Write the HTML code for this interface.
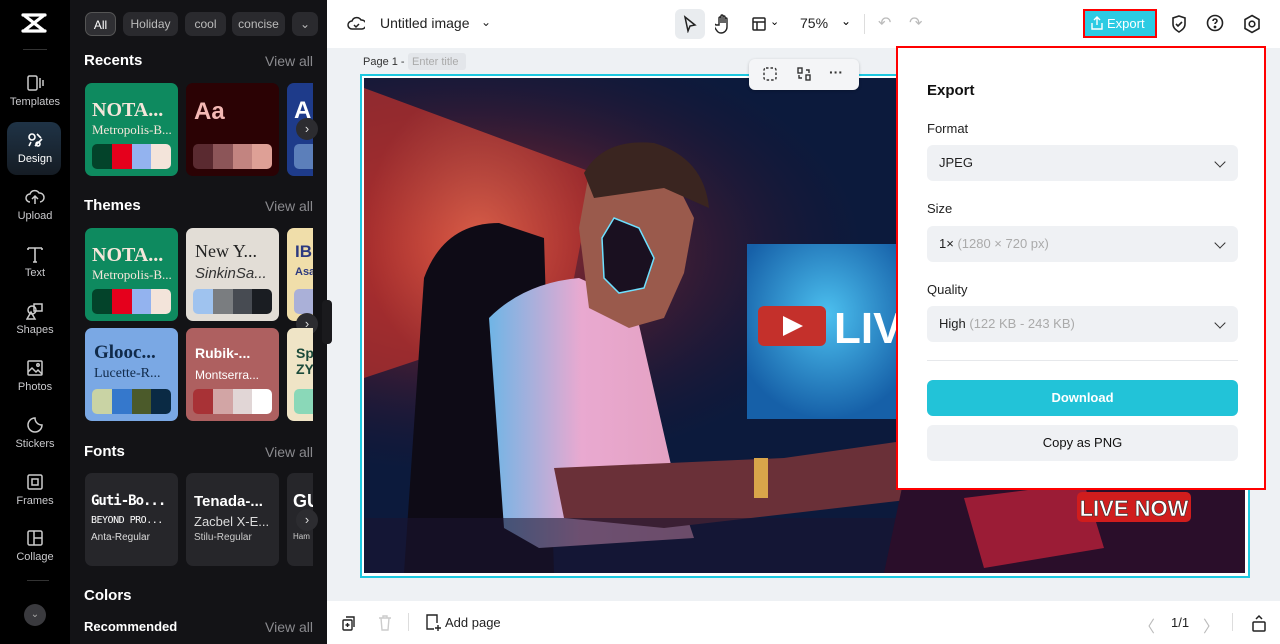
<!DOCTYPE html>
<html><head><meta charset="utf-8">
<style>
*{box-sizing:border-box;margin:0;padding:0}
body{width:1280px;height:644px;overflow:hidden;font-family:"Liberation Sans",sans-serif;background:#eef1f4;position:relative}
.abs{position:absolute}
#rail{left:0;top:0;width:70px;height:644px;background:#000}
.ri{position:absolute;left:0;width:70px;text-align:center;color:#c9c9cc;font-size:11px}
.ri svg{display:block;margin:0 auto 4px}
#panel{left:70px;top:0;width:257px;height:644px;background:#131316;overflow:hidden}
.chip{position:absolute;top:12px;height:24px;border-radius:7px;background:#2a2a2e;color:#bbb;font-size:12px;line-height:24px;text-align:center}
.h{position:absolute;left:14px;color:#fff;font-weight:bold;font-size:15px}
.va{position:absolute;right:14px;color:#8a8a8e;font-size:14px}
.card{position:absolute;width:93px;height:93px;border-radius:7px;overflow:hidden;white-space:nowrap}
.card.c3{width:26px;border-radius:7px 0 0 7px}
.sw{position:absolute;left:7px;bottom:7px;width:79px;height:25px;border-radius:5px;overflow:hidden;display:flex}
.sw i{flex:1}
.arr{position:absolute;width:22px;height:22px;border-radius:50%;background:#2c2c30;color:#ddd;font-size:13px;text-align:center;line-height:21px}
#top{left:327px;top:0;width:953px;height:48px;background:#fff}
#bot{left:327px;top:601px;width:953px;height:43px;background:#fff}
.fld{position:absolute;left:29px;width:311px;height:36px;border-radius:6px;background:#eff1f4;font-size:13px;color:#222;line-height:36px;padding-left:12px}
.fld b{position:absolute;right:14px;top:13px;width:8px;height:8px;border-right:1.6px solid #333;border-bottom:1.6px solid #333;transform:rotate(45deg)}
.lbl{position:absolute;left:29px;font-size:13px;color:#222}
</style></head><body>

<div id="rail" class="abs">
  <svg class="abs" style="left:20px;top:12px" width="28" height="22" viewBox="0 0 28 22"><path d="M3 3h22M3 19h22M5 4l18 14M23 4L5 18" stroke="#fff" stroke-width="3.2" fill="none" stroke-linecap="round"/></svg>
  <div class="abs" style="left:23px;top:49px;width:24px;height:1px;background:#333"></div>
  <div class="ri" style="top:74px"><svg width="18" height="18" viewBox="0 0 18 18" fill="none" stroke="#ccc" stroke-width="1.5"><rect x="2" y="2" width="9" height="14" rx="1.5"/><path d="M14 4v10M17 6v6"/></svg>Templates</div>
  <div class="abs" style="left:7px;top:122px;width:54px;height:53px;border-radius:10px;background:linear-gradient(#1f3346,#151c24)"></div>
  <div class="ri" style="top:131px;color:#fff"><svg width="18" height="18" viewBox="0 0 18 18" fill="none" stroke="#fff" stroke-width="1.6"><circle cx="6" cy="6" r="3"/><path d="M9 15l7-7M3 15l2-4M11 3l4 4"/><circle cx="12" cy="13" r="2"/></svg>Design</div>
  <div class="ri" style="top:188px"><svg width="20" height="18" viewBox="0 0 20 18" fill="none" stroke="#ccc" stroke-width="1.5"><path d="M5 14a4 4 0 010-8 5 5 0 019-1 4 4 0 011 9"/><path d="M10 16V9M7 11l3-3 3 3"/></svg>Upload</div>
  <div class="ri" style="top:245px"><svg width="18" height="18" viewBox="0 0 18 18" fill="none" stroke="#ccc" stroke-width="1.6"><path d="M2 3h14M9 3v14M2 3v2M16 3v2M7 17h4"/></svg>Text</div>
  <div class="ri" style="top:302px"><svg width="18" height="18" viewBox="0 0 18 18" fill="none" stroke="#ccc" stroke-width="1.5"><rect x="8" y="2" width="8" height="7"/><circle cx="6" cy="8" r="4"/><path d="M5 10l4 7H1z"/></svg>Shapes</div>
  <div class="ri" style="top:359px"><svg width="18" height="18" viewBox="0 0 18 18" fill="none" stroke="#ccc" stroke-width="1.5"><rect x="2" y="2" width="14" height="14" rx="1"/><path d="M2 13l4-4 4 4 2-2 4 4"/><circle cx="12" cy="6" r="1.2"/></svg>Photos</div>
  <div class="ri" style="top:416px"><svg width="18" height="18" viewBox="0 0 18 18" fill="none" stroke="#ccc" stroke-width="1.5"><path d="M16 9A7 7 0 119 2c0 4 3 7 7 7z"/></svg>Stickers</div>
  <div class="ri" style="top:473px"><svg width="18" height="18" viewBox="0 0 18 18" fill="none" stroke="#ccc" stroke-width="1.5"><rect x="2" y="2" width="14" height="14" rx="1.5"/><rect x="6" y="6" width="6" height="6"/></svg>Frames</div>
  <div class="ri" style="top:529px"><svg width="18" height="18" viewBox="0 0 18 18" fill="none" stroke="#ccc" stroke-width="1.5"><rect x="2" y="2" width="14" height="14" rx="1.5"/><path d="M8 2v14M8 9h8"/></svg>Collage</div>
  <div class="abs" style="left:27px;top:580px;width:22px;height:1px;background:#333"></div>
  <div class="abs" style="left:24px;top:604px;width:22px;height:22px;border-radius:50%;background:#3a3a3e;color:#aaa;font-size:10px;text-align:center;line-height:22px">&#8964;</div>
</div>

<div id="panel" class="abs">
  <div class="chip" style="left:15px;width:31px;background:#2f2f33;color:#fff;border:1px solid #555">All</div>
  <div class="chip" style="left:53px;width:55px">Holiday</div>
  <div class="chip" style="left:115px;width:41px">cool</div>
  <div class="chip" style="left:162px;width:53px">concise</div>
  <div class="chip" style="left:222px;width:26px">&#8964;</div>

  <div class="h" style="top:52px">Recents</div><div class="va" style="top:53px">View all</div>
  <div class="card" style="left:15px;top:83px;background:#0e8a5f"><div style="position:absolute;left:7px;top:16px;color:#f5e6da;font:900 20px 'Liberation Serif',serif">NOTA...</div><div style="position:absolute;left:7px;top:39px;color:#f5e6da;font:13px 'Liberation Serif',serif">Metropolis-B...</div><div class="sw"><i style="background:#03432a"></i><i style="background:#e5001c"></i><i style="background:#93b3ef"></i><i style="background:#f3e4da"></i></div></div>
  <div class="card" style="left:116px;top:83px;background:#2b0204"><div style="position:absolute;left:8px;top:15px;color:#f4b8b4;font:bold 24px 'Liberation Sans',sans-serif">Aa</div><div class="sw"><i style="background:#5a2a30"></i><i style="background:#8c5558"></i><i style="background:#c28480"></i><i style="background:#dea096"></i></div></div>
  <div class="card c3" style="left:217px;top:83px;background:#1e3b8a"><div style="position:absolute;left:7px;top:14px;color:#fff;font:bold 24px sans-serif">A</div><div class="sw" style="background:#5c7fba"></div></div>
  <div class="arr" style="left:226px;top:118px">&#8250;</div>

  <div class="h" style="top:197px">Themes</div><div class="va" style="top:198px">View all</div>
  <div class="card" style="left:15px;top:228px;background:#0e8a5f"><div style="position:absolute;left:7px;top:16px;color:#f5e6da;font:900 20px 'Liberation Serif',serif">NOTA...</div><div style="position:absolute;left:7px;top:39px;color:#f5e6da;font:13px 'Liberation Serif',serif">Metropolis-B...</div><div class="sw"><i style="background:#03432a"></i><i style="background:#e5001c"></i><i style="background:#93b3ef"></i><i style="background:#f3e4da"></i></div></div>
  <div class="card" style="left:116px;top:228px;background:#e2ddd6"><div style="position:absolute;left:9px;top:13px;color:#222;font:18px 'Liberation Serif',serif">New Y...</div><div style="position:absolute;left:9px;top:37px;color:#333;font:italic 15px sans-serif">SinkinSa...</div><div class="sw"><i style="background:#9fc3ef"></i><i style="background:#7a7d80"></i><i style="background:#474b52"></i><i style="background:#1a1d22"></i></div></div>
  <div class="card c3" style="left:217px;top:228px;background:#f0deaa"><div style="position:absolute;left:8px;top:14px;color:#2d3a80;font:bold 17px sans-serif">IB</div><div style="position:absolute;left:8px;top:38px;color:#2d3a80;font:bold 11px sans-serif">Asa</div><div class="sw" style="background:#aab0d8"></div></div>
  <div class="arr" style="left:226px;top:313px">&#8250;</div>
  <div class="card" style="left:15px;top:328px;background:#7aa8e4"><div style="position:absolute;left:9px;top:14px;color:#102a4a;font:bold 19px 'Liberation Serif',serif">Glooc...</div><div style="position:absolute;left:9px;top:38px;color:#102a4a;font:14px 'Liberation Serif',serif">Lucette-R...</div><div class="sw"><i style="background:#c9d3a4"></i><i style="background:#3578cc"></i><i style="background:#4b5a2a"></i><i style="background:#0a2a44"></i></div></div>
  <div class="card" style="left:116px;top:328px;background:#ae6060"><div style="position:absolute;left:9px;top:17px;color:#fff;font:bold 14px sans-serif">Rubik-...</div><div style="position:absolute;left:9px;top:40px;color:#fff;font:12px sans-serif">Montserra...</div><div class="sw"><i style="background:#a83236"></i><i style="background:#d2a5a5"></i><i style="background:#e1d6d6"></i><i style="background:#fff"></i></div></div>
  <div class="card c3" style="left:217px;top:328px;background:#efe4c6"><div style="position:absolute;left:9px;top:17px;color:#1b4a3a;font:bold 14px sans-serif">Sp<br>ZY</div><div class="sw" style="background:#8ad8b8"></div></div>

  <div class="h" style="top:443px">Fonts</div><div class="va" style="top:444px">View all</div>
  <div class="card" style="left:15px;top:473px;background:#26262a"><div style="position:absolute;left:6px;top:20px;color:#fff;font:bold 14px 'DejaVu Sans Mono',monospace;letter-spacing:-1px">Guti-Bo...</div><div style="position:absolute;left:6px;top:42px;color:#fff;font:10px 'DejaVu Sans Mono',monospace;letter-spacing:-0.5px">BEYOND PRO...</div><div style="position:absolute;left:6px;top:59px;color:#ddd;font:10px sans-serif">Anta-Regular</div></div>
  <div class="card" style="left:116px;top:473px;background:#26262a"><div style="position:absolute;left:8px;top:20px;color:#fff;font:bold 15px sans-serif">Tenada-...</div><div style="position:absolute;left:8px;top:41px;color:#ddd;font:13px sans-serif">Zacbel X-E...</div><div style="position:absolute;left:8px;top:59px;color:#ccc;font:10px sans-serif">Stilu-Regular</div></div>
  <div class="card c3" style="left:217px;top:473px;background:#26262a"><div style="position:absolute;left:6px;top:18px;color:#fff;font:bold 18px sans-serif">GU</div><div style="position:absolute;left:6px;top:59px;color:#ccc;font:8px sans-serif">Ham</div></div>
  <div class="arr" style="left:226px;top:509px">&#8250;</div>

  <div class="h" style="top:587px">Colors</div>
  <div class="h" style="top:619px;font-size:13px">Recommended</div><div class="va" style="top:619px">View all</div>
</div>
<div class="abs" style="left:322px;top:300px;width:10px;height:44px;border-radius:4px;background:#1a1a1d"></div>

<div id="top" class="abs">
  <svg class="abs" style="left:20px;top:15px" width="18" height="18" viewBox="0 0 18 18" fill="none" stroke="#222" stroke-width="1.5"><path d="M5 14a4 4 0 010-8 5 5 0 019-1 4 4 0 011 9z"/><path d="M7 10l2 2 3-3"/></svg>
  <div class="abs" style="left:53px;top:15px;font-size:14px;color:#222">Untitled image</div>
  <div class="abs" style="left:154px;top:15px;font-size:12px;color:#222">&#8964;</div>
  <div class="abs" style="left:348px;top:9px;width:30px;height:30px;border-radius:6px;background:#e9ecef"></div>
  <svg class="abs" style="left:355px;top:15px" width="16" height="18" viewBox="0 0 16 18" fill="none" stroke="#222" stroke-width="1.5"><path d="M3 2l10 8-5 1-2 5z"/></svg>
  <svg class="abs" style="left:388px;top:14px" width="16" height="20" viewBox="0 0 16 20" fill="none" stroke="#222" stroke-width="1.4"><path d="M4 11V4a1 1 0 012 0v5V2a1 1 0 012 0v7V3a1 1 0 012 0v6V5a1 1 0 012 0v8a6 6 0 01-6 6c-3 0-4-2-6-5l-1-2a1 1 0 012-1z"/></svg>
  <svg class="abs" style="left:424px;top:16px" width="16" height="16" viewBox="0 0 16 16" fill="none" stroke="#222" stroke-width="1.5"><rect x="2" y="2" width="12" height="12" rx="1"/><path d="M2 6h12M6 6v8"/></svg>
  <div class="abs" style="left:443px;top:15px;font-size:11px">&#8964;</div>
  <div class="abs" style="left:473px;top:15px;font-size:14px;color:#222">75%</div>
  <div class="abs" style="left:514px;top:14px;font-size:12px">&#8964;</div>
  <div class="abs" style="left:537px;top:14px;width:1px;height:20px;background:#ddd"></div>
  <div class="abs" style="left:551px;top:13px;font-size:16px;color:#bbb">&#8630;</div>
  <div class="abs" style="left:582px;top:13px;font-size:16px;color:#bbb">&#8631;</div>
  <div class="abs" style="left:756px;top:9px;width:74px;height:29px;border:2px solid #f00;background:#2ccbe3"></div>
  <svg class="abs" style="left:764px;top:16px" width="12" height="14" viewBox="0 0 12 14" fill="none" stroke="#fff" stroke-width="1.4"><path d="M6 9V1M3 4l3-3 3 3M1 7v6h10V7"/></svg>
  <div class="abs" style="left:780px;top:16px;font-size:13px;color:#fff">Export</div>
  <svg class="abs" style="left:843px;top:14px" width="18" height="20" viewBox="0 0 18 20" fill="none" stroke="#222" stroke-width="1.6"><path d="M9 2l6 2v6c0 4-3 6-6 8-3-2-6-4-6-8V4z"/><path d="M6 10l2 2 4-4"/></svg>
  <svg class="abs" style="left:879px;top:14px" width="18" height="18" viewBox="0 0 18 18" fill="none" stroke="#222" stroke-width="1.6"><circle cx="9" cy="9" r="7.5"/><path d="M7 7a2 2 0 114 0c0 1.5-2 1.5-2 3"/><circle cx="9" cy="13" r=".6" fill="#222"/></svg>
  <svg class="abs" style="left:916px;top:14px" width="18" height="20" viewBox="0 0 18 20" fill="none" stroke="#222" stroke-width="1.6"><path d="M9 1.5l7 4v9l-7 4-7-4v-9z"/><circle cx="9" cy="10" r="2.8"/></svg>
</div>

<div class="abs" style="left:363px;top:56px;font-size:11px;color:#333">Page 1 -</div>
<div class="abs" style="left:408px;top:53px;width:58px;height:17px;background:#e3e6ea;border-radius:3px;font-size:11px;color:#aaa;padding:3px 4px">Enter title</div>

<div class="abs" style="left:360px;top:74px;width:890px;height:504px;border:2px solid #1dc8e0;background:#fff"></div>
<svg class="abs" style="left:364px;top:78px" width="881" height="495" viewBox="0 0 881 495">
  <defs>
    <radialGradient id="g1" cx="0.12" cy="0.35" r="0.45"><stop offset="0" stop-color="#b8322e"/><stop offset="1" stop-color="#2a0d2a" stop-opacity="0"/></radialGradient>
    <linearGradient id="sh" x1="0" y1="0" x2="1" y2="0"><stop offset="0" stop-color="#6fb5e6"/><stop offset=".45" stop-color="#e9a9d0"/><stop offset="1" stop-color="#e3a0c0"/></linearGradient>
    <radialGradient id="mon" cx=".5" cy=".4" r=".6"><stop offset="0" stop-color="#4cc0ef"/><stop offset="1" stop-color="#1660a8"/></radialGradient>
    <radialGradient id="wd" cx=".5" cy=".5" r=".5"><stop offset="0" stop-color="#e86a4e"/><stop offset="1" stop-color="#b8302c"/></radialGradient>
  </defs>
  <rect width="881" height="495" fill="#0c1a3c"/>
  <rect width="881" height="495" fill="url(#g1)"/>
  <path d="M0 10L230 95 210 200 150 230 60 280 0 300z" fill="url(#wd)" opacity=".75"/>
  <rect x="383" y="166" width="160" height="175" fill="url(#mon)"/>
  <path d="M40 495L60 200Q80 145 135 145L180 160 190 495z" fill="#0e0b16"/>
  <path d="M125 240Q160 205 215 200L270 225 310 400 330 460 175 470 140 450z" fill="url(#sh)"/>
  <path d="M215 150L225 230 265 250 300 240 320 195 330 140 310 100 260 80 225 95z" fill="#9a5a4c"/>
  <path d="M220 95Q240 60 290 65 340 80 345 130L300 110 230 120z" fill="#3a2520"/>
  <path d="M250 140L275 150 290 180 280 210 255 215 240 200 238 160z" fill="#1a1020" stroke="#6ee0ff" stroke-width="1.5"/>
  <path d="M190 390L420 380 560 360 560 420 300 450 200 440z" fill="#6a3038"/>
  <rect x="390" y="380" width="14" height="40" fill="#d9a54a"/>
  <rect x="0" y="440" width="881" height="55" fill="#1a1430" opacity=".6"/>
  <rect x="394" y="228" width="68" height="40" rx="6" fill="#c4302b"/>
  <path d="M419 238l20 10-20 10z" fill="#fff"/>
  <text x="470" y="265" font-family="Liberation Sans" font-weight="bold" font-size="44" fill="#fff">LIVE</text>
  <path d="M540 400L881 380 881 495 520 495z" fill="#2a0e2a"/>
  <path d="M600 420L720 405 740 470 620 490z" fill="#b8203a" opacity=".8"/>
  <rect x="713" y="414" width="114" height="30" rx="5" fill="#d01d1d"/>
  <text x="770" y="438" text-anchor="middle" font-family="Liberation Sans" font-weight="bold" font-size="22" fill="#fff" stroke="#333" stroke-width=".6">LIVE NOW</text>
</svg>

<div class="abs" style="left:749px;top:59px;width:110px;height:31px;background:#f4f5f7;border-radius:6px;box-shadow:0 1px 3px rgba(0,0,0,.2)"></div>
<svg class="abs" style="left:762px;top:66px" width="16" height="16" viewBox="0 0 16 16" fill="none" stroke="#333" stroke-width="1.4" stroke-dasharray="2.5 2"><rect x="2" y="2" width="12" height="12" rx="2"/></svg>
<svg class="abs" style="left:796px;top:66px" width="16" height="16" viewBox="0 0 16 16" fill="none" stroke="#333" stroke-width="1.4"><rect x="2" y="2" width="4" height="5"/><rect x="10" y="9" width="4" height="5"/><path d="M10 4h3v3M6 12H3V9"/></svg>
<div class="abs" style="left:829px;top:64px;font-size:14px;font-weight:bold;color:#333">···</div>

<div class="abs" style="left:896px;top:46px;width:370px;height:444px;background:#fff;border:2px solid #f00">
  <div class="abs" style="left:29px;top:34px;font-size:15px;font-weight:bold;color:#111">Export</div>
  <div class="lbl" style="top:73px">Format</div>
  <div class="fld" style="top:97px">JPEG<b></b></div>
  <div class="lbl" style="top:153px">Size</div>
  <div class="fld" style="top:178px">1× <span style="color:#aaa">(1280 × 720 px)</span><b></b></div>
  <div class="lbl" style="top:234px">Quality</div>
  <div class="fld" style="top:258px">High <span style="color:#aaa">(122 KB - 243 KB)</span><b></b></div>
  <div class="abs" style="left:29px;top:312px;width:311px;height:1px;background:#e6e8eb"></div>
  <div class="abs" style="left:29px;top:332px;width:311px;height:36px;border-radius:6px;background:#22c3d8;color:#fff;font-weight:bold;font-size:13px;text-align:center;line-height:36px">Download</div>
  <div class="abs" style="left:29px;top:377px;width:311px;height:36px;border-radius:6px;background:#eff1f4;color:#111;font-size:13px;text-align:center;line-height:36px">Copy as PNG</div>
</div>

<div id="bot" class="abs">
  <svg class="abs" style="left:14px;top:14px" width="16" height="17" viewBox="0 0 16 17" fill="none" stroke="#222" stroke-width="1.4"><rect x="2" y="5" width="9" height="10" rx="1"/><path d="M5 2h8v10M6.5 8v4M4.5 10h4"/></svg>
  <svg class="abs" style="left:51px;top:14px" width="14" height="16" viewBox="0 0 14 16" fill="none" stroke="#ccc" stroke-width="1.4"><path d="M1 3h12M5 3V1h4v2M3 3l1 12h6l1-12"/></svg>
  <div class="abs" style="left:81px;top:12px;width:1px;height:18px;background:#ddd"></div>
  <svg class="abs" style="left:97px;top:12px" width="18" height="20" viewBox="0 0 18 20" fill="none" stroke="#222" stroke-width="1.4"><path d="M10 16H3V2h10v8"/><path d="M14 12v6M11 15h6"/></svg>
  <div class="abs" style="left:118px;top:14px;font-size:13px;color:#222">Add page</div>
  <div class="abs" style="left:812px;top:12px;font-size:16px;color:#bbb">&#12296;</div>
  <div class="abs" style="left:844px;top:14px;font-size:13px;color:#222">1/1</div>
  <div class="abs" style="left:876px;top:12px;font-size:16px;color:#bbb">&#12297;</div>
  <div class="abs" style="left:905px;top:12px;width:1px;height:18px;background:#ddd"></div>
  <svg class="abs" style="left:924px;top:12px" width="16" height="20" viewBox="0 0 16 20" fill="none" stroke="#222" stroke-width="1.5"><rect x="2" y="9" width="12" height="9" rx="1"/><path d="M5 6l3-3 3 3"/></svg>
</div>
</body></html>
